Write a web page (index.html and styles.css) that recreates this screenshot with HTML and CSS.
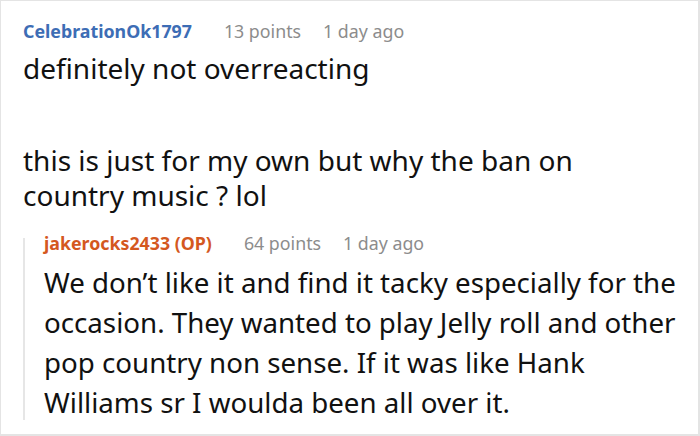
FILE: index.html
```html
<!DOCTYPE html>
<html>
<head>
<meta charset="utf-8">
<link rel="stylesheet" href="styles.css">
</head>
<body>
<div class="frame">
  <div class="comment">
    <div class="meta">
      <span class="author">CelebrationOk1797</span>
      <span class="info">13 points</span>
      <span class="info">1 day ago</span>
    </div>
    <div class="body">
      <p>definitely not overreacting</p>
      <p>this is just for my own but why the ban on<br>country music ? lol</p>
    </div>
    <div class="reply">
      <div class="rail"></div>
      <div class="rcontent">
        <div class="meta">
          <span class="author op">jakerocks2433 (OP)</span>
          <span class="info">64 points</span>
          <span class="info">1 day ago</span>
        </div>
        <div class="rbody">
          <div class="line">We don’t like it and find it tacky especially for the</div>
          <div class="line">occasion. They wanted to play Jelly roll and other</div>
          <div class="line">pop country non sense. If it was like Hank</div>
          <div class="line">Williams sr I woulda been all over it.</div>
        </div>
      </div>
    </div>
  </div>
</div>
</body>
</html>
```
FILE: styles.css
```css
html, body {
  margin: 0;
  padding: 0;
  background: #fff;
}
body {
  font-family: "Noto Sans", "Open Sans", sans-serif;
  color: #111;
}
.frame {
  width: 700px;
  height: 436px;
  box-sizing: border-box;
  border: 1px solid #e4e4e4;
  border-right-width: 2px;
  border-bottom-width: 2px;
  overflow: hidden;
}
.comment {
  padding: 16px 0 0 22px;
}
.meta {
  display: flex;
  gap: 22px;
  font-size: 17.8px;
  line-height: 28px;
}
.author {
  font-weight: 700;
  color: #3d6db5;
  margin-right: 10px;
}
.author.op {
  color: #d4581f;
}
.info {
  color: #8c8c8c;
}
.body {
  font-size: 28px;
  line-height: 35px;
  margin-top: 6px;
}
.body p {
  margin: 0 0 57px 0;
}
.body p:last-child {
  margin-bottom: 16px;
}
.reply {
  display: flex;
}
.rail {
  width: 2px;
  flex: none;
  background: #e6e6e6;
  margin: 9px 19px 2px 0;
}
.rbody {
  font-size: 27.7px;
  line-height: 40px;
  margin-top: 5px;
}
.line {
  white-space: nowrap;
}
```
